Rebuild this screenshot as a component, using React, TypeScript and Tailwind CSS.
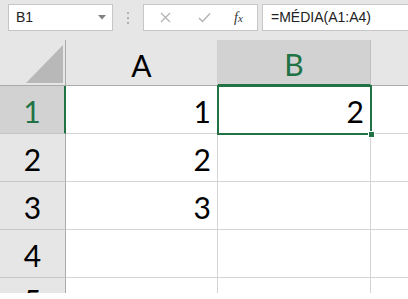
import React from "react";

const grid = "border-r border-b border-[#d4d4d4]";

export default function App() {
  const rows = [
    { n: "1", a: "1", b: "2" },
    { n: "2", a: "2", b: "" },
    { n: "3", a: "3", b: "" },
    { n: "4", a: "", b: "" },
    { n: "5", a: "", b: "" },
  ];
  return (
    <div className="w-[408px] h-[299px] bg-white overflow-hidden relative" style={{ fontFamily: "Lato, 'Liberation Sans', sans-serif" }}>
      {/* Toolbar */}
      <div className="h-[40px] bg-[#e6e6e6] flex items-start pt-[4px] pl-[8px]">
        <div className="w-[105px] h-[27px] bg-white border border-[#c6c6c6] flex items-center pl-[7px] pr-[6px] justify-between">
          <span className="text-[14px] text-[#222]" style={{ fontFamily: "'Liberation Sans', sans-serif" }}>B1</span>
          <svg width="8" height="5" viewBox="0 0 8 5"><path d="M0 0 L8 0 L4 4.5 Z" fill="#808080" /></svg>
        </div>
        <div className="w-[30px] h-[27px] flex flex-col items-center justify-center gap-[3px]">
          <span className="w-[2px] h-[2px] bg-[#b0b0b0]" />
          <span className="w-[2px] h-[2px] bg-[#b0b0b0]" />
          <span className="w-[2px] h-[2px] bg-[#b0b0b0]" />
        </div>
        <div className="w-[115px] h-[27px] bg-white border border-[#c6c6c6] flex items-center">
          <div className="w-[40px] flex justify-center pl-[3px]">
            <svg width="11" height="11" viewBox="0 0 11 11"><path d="M1 1 L10 10 M10 1 L1 10" stroke="#b4b4b4" strokeWidth="1.3" /></svg>
          </div>
          <div className="w-[40px] flex justify-center">
            <svg width="13" height="11" viewBox="0 0 13 11"><path d="M1 6 L4.5 9.5 L12 1.5" stroke="#b4b4b4" strokeWidth="1.5" fill="none" /></svg>
          </div>
          <div className="flex-1 flex justify-center pr-[4px]">
            <span className="italic text-[14px] text-[#333]" style={{ fontFamily: "'Liberation Serif', serif" }}>f<span className="text-[11px]">x</span></span>
          </div>
        </div>
        <div className="ml-[4px] flex-1 h-[27px] bg-white border border-r-0 border-[#c6c6c6] flex items-center pl-[8px]">
          <span className="text-[14px] text-[#222]" style={{ fontFamily: "'Liberation Sans', sans-serif" }}>=MÉDIA(A1:A4)</span>
        </div>
      </div>

      {/* Grid */}
      <div className="grid grid-cols-[66px_152px_153px_1fr] grid-rows-[46px_48px_48px_48px_48px_16px] text-[30px] leading-none">
        {/* header row */}
        <div className="bg-[#e6e6e6] border-r border-b border-[#ababab] relative">
          <svg className="absolute left-0 top-0" width="65" height="45" viewBox="0 0 65 45">
            <path d="M26 43 L63 5 L63 43 Z" fill="#b8b8b8" />
          </svg>
        </div>
        <div className="bg-[#e6e6e6] border-r border-b border-[#ababab] border-r-[#cfcfcf] flex items-center justify-center pt-[4px] text-black">A</div>
        <div className="bg-[#d2d2d2] border-r border-b-2 border-r-[#c0c0c0] border-b-[#217346] flex items-center justify-center pt-[4px] text-[#217346]">B</div>
        <div className="bg-[#e6e6e6] border-b border-[#ababab]"></div>

        {rows.map((r, i) => (
          <React.Fragment key={r.n}>
            <div
              className={
                i === 0
                  ? "bg-[#d2d2d2] border-r-2 border-b border-r-[#217346] border-b-[#c6c6c6] flex items-center justify-center pt-[3px] text-[#217346]"
                  : "bg-[#e6e6e6] border-r border-b border-r-[#ababab] border-b-[#c6c6c6] flex items-center justify-center pt-[3px] text-black"
              }
            >
              {i === 4 ? <span className="mt-[26px]">{r.n}</span> : r.n}
            </div>
            <div className={`${grid} flex items-end justify-end pr-[6px] pb-[7px] text-black`}>{r.a}</div>
            <div className={`${grid} flex items-end justify-end pr-[6px] pb-[7px] text-black`}>{r.b}</div>
            <div className="border-b border-[#d4d4d4]"></div>
          </React.Fragment>
        ))}
      </div>

      {/* white bottom margin */}
      <div className="absolute left-0 right-0 top-[293px] h-[6px] bg-white" />

      {/* Selection overlay */}
      <div className="absolute left-[217px] top-[85px] w-[155px] h-[50px] border-2 border-[#217346] pointer-events-none" />
      <div className="absolute left-[368px] top-[131px] w-[7px] h-[7px] bg-[#217346] border border-white" />
    </div>
  );
}
